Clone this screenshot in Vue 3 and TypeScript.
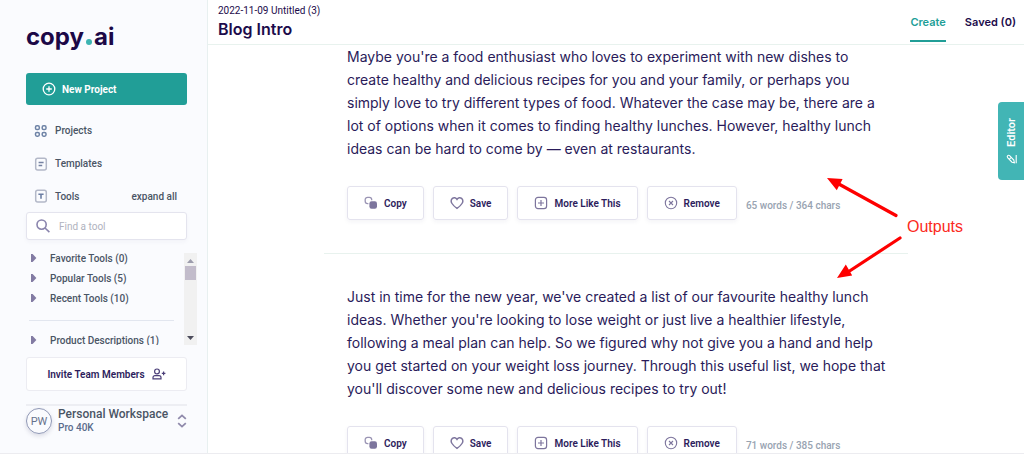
<script setup lang="ts">
import { ref } from 'vue'

interface Output {
  lines: string[]
  words: number
  chars: number
}

const query = ref('')

const groups: string[] = ['Favorite Tools (0)', 'Popular Tools (5)', 'Recent Tools (10)']

const outputs: Output[] = [
  {
    lines: [
      "Maybe you're a food enthusiast who loves to experiment with new dishes to",
      'create healthy and delicious recipes for you and your family, or perhaps you',
      'simply love to try different types of food. Whatever the case may be, there are a',
      'lot of options when it comes to finding healthy lunches. However, healthy lunch',
      'ideas can be hard to come by — even at restaurants.',
    ],
    words: 65,
    chars: 364,
  },
  {
    lines: [
      "Just in time for the new year, we've created a list of our favourite healthy lunch",
      "ideas. Whether you're looking to lose weight or just live a healthier lifestyle,",
      'following a meal plan can help. So we figured why not give you a hand and help',
      'you get started on your weight loss journey. Through this useful list, we hope that',
      "you'll discover some new and delicious recipes to try out!",
    ],
    words: 71,
    chars: 385,
  },
]
</script>

<template>
  <div class="app">
    <aside class="sidebar">
      <div class="logo">copy<span class="logo-dot"></span>ai</div>

      <button class="new-project" type="button">
        <svg width="14" height="14" viewBox="0 0 14 14" fill="none" stroke="currentColor" stroke-width="1.3">
          <circle cx="7" cy="7" r="5.8" />
          <path d="M7 4.2v5.6M4.2 7h5.6" />
        </svg>
        New Project
      </button>

      <nav class="nav">
        <a href="#projects">
          <svg width="14" height="14" viewBox="0 0 14 14" fill="none" stroke="#6e83a6" stroke-width="1.5">
            <rect x="1.5" y="1.8" width="3.8" height="3.8" rx="1.4" />
            <rect x="8.2" y="1.8" width="3.8" height="3.8" rx="1.4" />
            <rect x="1.5" y="8.4" width="3.8" height="3.8" rx="1.4" />
            <rect x="8.2" y="8.4" width="3.8" height="3.8" rx="1.4" />
          </svg>
          Projects
        </a>
        <a href="#templates">
          <svg width="14" height="14" viewBox="0 0 14 14" fill="none">
            <rect x="1.7" y="1.2" width="10.6" height="11.8" rx="2" stroke="#b3b8c8" stroke-width="1.5" />
            <path d="M4.6 5.4h5M4.6 8.6h3.6" stroke="#7682a2" stroke-width="1.5" />
          </svg>
          Templates
        </a>
        <div class="nav-row">
          <a href="#tools">
            <svg width="14" height="14" viewBox="0 0 14 14" fill="none">
              <rect x="1.7" y="1.2" width="10.6" height="11.8" rx="2" stroke="#b3b8c8" stroke-width="1.5" />
              <path d="M4.4 5.2h5.2M7 5v4.8" stroke="#6d7fa4" stroke-width="1.6" />
            </svg>
            Tools
          </a>
          <button class="expand" type="button">expand all</button>
        </div>
      </nav>

      <label class="search">
        <svg width="14" height="14" viewBox="0 0 14 14" fill="none" stroke="#8a84ad" stroke-width="1.6">
          <circle cx="5.6" cy="5.6" r="4.6" />
          <path d="M9 9l4.4 4.2" />
        </svg>
        <input v-model="query" type="text" placeholder="Find a tool" aria-label="Find a tool" />
      </label>

      <div class="tools">
        <div class="tool-list">
          <button v-for="group in groups" :key="group" class="group" type="button">
            <svg width="6" height="8" viewBox="0 0 6 8"><path d="M0 0h1.6L5.4 4 1.6 8H0z" fill="#827ba3" /></svg>
            {{ group }}
          </button>
          <hr />
          <button class="group" type="button">
            <svg width="6" height="8" viewBox="0 0 6 8"><path d="M0 0h1.6L5.4 4 1.6 8H0z" fill="#827ba3" /></svg>
            Product Descriptions (1)
          </button>
        </div>
        <div class="scrollbar" aria-hidden="true">
          <svg width="7" height="4" viewBox="0 0 7 4"><path d="M3.5 0L7 4H0z" fill="#9c9cac" /></svg>
          <div class="thumb"></div>
          <svg class="down" width="7" height="4" viewBox="0 0 7 4"><path d="M3.5 4L7 0H0z" fill="#4c4c5c" /></svg>
        </div>
      </div>

      <button class="invite" type="button">
        Invite Team Members
        <svg width="14" height="12" viewBox="0 0 14 12" fill="none" stroke="#4b3f78" stroke-width="1.2">
          <circle cx="5" cy="3.4" r="2.4" />
          <path d="M1 10.8V9.6c0-1.2.9-2 2-2h4c1.1 0 2 .8 2 2v1.2zM9.8 5.4h3.6M11.6 3.6v3.6" />
        </svg>
      </button>

      <button class="workspace" type="button">
        <span class="avatar">PW</span>
        <span class="who">
          <span class="name">Personal Workspace</span>
          <span class="plan">Pro 40K</span>
        </span>
        <svg width="10" height="14" viewBox="0 0 10 14" fill="none" stroke="#8f89ab" stroke-width="1.8">
          <path d="M1.2 4.8L5 1.4l3.8 3.4M1.2 9.2L5 12.6l3.8-3.4" />
        </svg>
      </button>
    </aside>

    <main class="main">
      <header class="header">
        <div class="titles">
          <div class="project">2022-11-09 Untitled (3)</div>
          <h1>Blog Intro</h1>
        </div>
        <nav class="tabs">
          <a class="active" href="#create">Create</a>
          <a href="#saved">Saved (0)</a>
        </nav>
      </header>

      <div class="outputs">
        <article v-for="output in outputs" :key="output.words" class="output">
          <p><span v-for="line in output.lines" :key="line">{{ line }} </span></p>
          <div class="actions">
            <button type="button">
              <svg width="14" height="14" viewBox="0 0 14 14" fill="none">
                <path d="M4.4 7.6H3.6C2.2 7.6 1.2 6.5 1.2 5.2V3.6c0-1.3 1-2.3 2.4-2.3h1.8c1.3 0 2.3 1 2.3 2.3v.6" stroke="#9a94b4" stroke-width="1.3" />
                <rect x="5.4" y="5.2" width="7.6" height="7.6" rx="2.2" fill="#7d759d" />
              </svg>
              Copy
            </button>
            <button type="button">
              <svg width="14" height="14" viewBox="0 0 14 14" fill="none" stroke="#7d759d" stroke-width="1.4">
                <path d="M7 3.3C6 1.5 3.8 1.2 2.4 2.4.9 3.7 1 5.9 2 7.5 3.1 9.3 5 11 7 12.4c2-1.4 3.9-3.1 5-4.9 1-1.6 1.1-3.8-.4-5.1C10.2 1.2 8 1.5 7 3.3z" />
              </svg>
              Save
            </button>
            <button type="button">
              <svg width="14" height="14" viewBox="0 0 14 14" fill="none" stroke="#7d759d" stroke-width="1.2">
                <rect x="1.4" y="1.4" width="11.2" height="11.2" rx="2.6" />
                <path d="M7 4v6M4 7h6" />
              </svg>
              More Like This
            </button>
            <button type="button">
              <svg width="14" height="14" viewBox="0 0 14 14" fill="none" stroke="#7d759d" stroke-width="1.1">
                <circle cx="7" cy="7" r="5.7" />
                <path d="M5 5l4 4M9 5l-4 4" />
              </svg>
              Remove
            </button>
            <span class="count">{{ output.words }} words / {{ output.chars }} chars</span>
          </div>
        </article>
      </div>

      <button class="editor" type="button">
        <svg width="11" height="11" viewBox="0 0 11 11" fill="none" stroke="currentColor" stroke-width="1.1">
          <path d="M10.2 2v8.2M8.4 9.8L7.8 7 3.6 2.6C2.2 1.6.6 3.200 1.600 4.600L6 9.200l2.400.6zM3.400 6.200l2-1.800" />
        </svg>
        <span>Editor</span>
      </button>

      <div class="note">
        <svg width="80" height="108" viewBox="0 0 80 108" fill="none">
          <path d="M69 38.5L10 6M73 61L18 97" stroke="#fe0000" stroke-width="3.2" stroke-linecap="round" />
          <path d="M0 1l15.6 1-5.8 11.2zM10 101l8.8-13.6 6.4 11z" fill="#fe0000" />
        </svg>
        <span>Outputs</span>
      </div>
    </main>
  </div>
</template>

<style>
body {
  margin: 0;
}
</style>

<style scoped>
* {
  box-sizing: border-box;
}

.app {
  display: flex;
  height: 100vh;
  overflow: hidden;
  border-bottom: 1px solid #ececf0;
  background: #fff;
  color: #1c0b4b;
  font-family: Roboto, "Liberation Sans", sans-serif;
  font-size: 10px;
}

button {
  display: flex;
  align-items: center;
  margin: 0;
  padding: 0;
  border: 0;
  background: none;
  color: inherit;
  font: inherit;
  cursor: pointer;
}

a {
  color: inherit;
  text-decoration: none;
}

svg {
  flex: none;
  display: block;
}

.sidebar {
  flex: none;
  display: flex;
  flex-direction: column;
  width: 208px;
  padding: 22px 20px 0 26px;
  border-right: 1px solid #e8f0f0;
  background: #fafbfe;
}

.logo {
  display: flex;
  align-items: baseline;
  height: 51px;
  color: #1c0847;
  font-family: Inter, "Liberation Sans", sans-serif;
  font-size: 24px;
  font-weight: 700;
  line-height: 29px;
}

.logo-dot {
  width: 6px;
  height: 6px;
  margin: 0 2px;
  border-radius: 50%;
  background: #3cb4b2;
}

.new-project {
  gap: 6px;
  height: 32px;
  padding: 0 16px;
  border-radius: 3px;
  background: #219e97;
  color: #fff;
  font-weight: 700;
}

.nav {
  display: flex;
  flex-direction: column;
  padding: 9px 10px 0 8px;
  color: #4a5565;
  font-weight: 500;
}

.nav a {
  display: flex;
  align-items: center;
  gap: 7px;
  height: 33px;
}

.nav-row {
  display: flex;
  justify-content: space-between;
  align-items: center;
  height: 32px;
}

.search {
  display: flex;
  align-items: center;
  gap: 9px;
  flex: none;
  height: 28px;
  padding: 0 9px;
  border: 1px solid #e4e4ee;
  border-radius: 3px;
  background: #fff;
  box-shadow: 0 2px 4px rgba(40, 40, 90, 0.04);
}

.search input {
  flex: 1;
  min-width: 0;
  padding: 0;
  border: 0;
  outline: 0;
  background: none;
  color: inherit;
  font: inherit;
}

.search input::placeholder {
  color: #b0b2be;
  opacity: 1;
}

.tools {
  flex: none;
  display: flex;
  height: 92px;
  margin: 13px -10px 0 0;
  overflow: hidden;
}

.tool-list {
  flex: 1;
  padding: 0 10px 0 3px;
  margin-top: -5px;
}

.group {
  gap: 13px;
  height: 20px;
  padding-left: 2px;
  color: #4a5565;
  font-weight: 500;
  white-space: nowrap;
}

hr {
  margin: 12px 0 9px;
  border: 0;
  border-top: 1px solid #e2e6ef;
}

.scrollbar {
  flex: none;
  display: flex;
  flex-direction: column;
  align-items: center;
  width: 13px;
  padding: 6px 0 5px;
  background: #f1f1f1;
}

.thumb {
  width: 11px;
  height: 14px;
  margin-top: 3px;
  background: #c2bccb;
}

.down {
  margin-top: auto;
}

.invite {
  flex: none;
  justify-content: center;
  gap: 7px;
  height: 34px;
  margin-top: 12px;
  border: 1px solid #ececf2;
  border-radius: 3px;
  background: #fff;
  color: #2d1d5c;
  font-weight: 600;
}

.workspace {
  flex: none;
  gap: 6px;
  height: 31px;
  margin-top: 13px;
  padding-top: 1px;
  border-top: 2px solid #edeef3;
  text-align: left;
}

.avatar {
  display: flex;
  align-items: center;
  justify-content: center;
  width: 26px;
  height: 26px;
  border: 1px solid #8f97b5;
  border-radius: 50%;
  color: #66728c;
  font-size: 11px;
  box-shadow: 0 2px 4px rgba(40, 40, 90, 0.15);
}

.who {
  flex: 1;
  color: #4a5565;
  font-weight: 500;
  white-space: nowrap;
}

.who span {
  display: block;
  line-height: 14px;
}

.who .name {
  font-size: 12px;
}

.who .plan {
  color: #5b6b8c;
}

.main {
  position: relative;
  flex: 1;
  min-width: 0;
  display: flex;
  flex-direction: column;
}

.header {
  flex: none;
  display: flex;
  justify-content: space-between;
  height: 45px;
  padding: 4px 8px 0 10px;
  border-bottom: 1px solid #e8f2ee;
}

.project {
  line-height: 14px;
}

h1 {
  margin: 0;
  font-family: Inter, "Liberation Sans", sans-serif;
  font-size: 16px;
  font-weight: 600;
  line-height: 22px;
}

.tabs {
  display: flex;
  gap: 19px;
  font-family: Inter, "Liberation Sans", sans-serif;
  font-size: 11px;
  font-weight: 600;
}

.tabs a {
  height: 38px;
  line-height: 37px;
}

.tabs .active {
  border-bottom: 2px solid #219e97;
  color: #219e97;
}

.outputs {
  flex: 1;
  min-height: 0;
  padding: 0 116px;
  overflow: hidden;
}

.output {
  padding: 0 0 33px 23px;
}

.output + .output {
  padding-top: 31px;
  border-top: 1px solid #e8f2ee;
}

.output p {
  margin: 0 0 26px;
  color: #2a1b5a;
  font-family: Inter, "Liberation Sans", sans-serif;
  font-size: 14px;
  line-height: 23px;
}

.output p span {
  display: block;
  white-space: nowrap;
}

.actions {
  display: flex;
  gap: 9px;
}

.actions button {
  gap: 6px;
  height: 34px;
  padding: 0 16px;
  border: 1px solid #e4e3ee;
  border-radius: 3px;
  box-shadow: 0 2px 4px rgba(40, 40, 90, 0.05);
  color: #2d1d5c;
  font-weight: 600;
}

.count {
  align-self: flex-end;
  color: #98a3b1;
  font-weight: 500;
  line-height: 28px;
}

.editor {
  position: absolute;
  top: 102px;
  right: 0;
  flex-direction: column-reverse;
  justify-content: center;
  gap: 6px;
  width: 26px;
  height: 78px;
  border-radius: 4px 0 0 4px;
  background: #42b5b5;
  color: #fff;
  font-size: 11px;
  font-weight: 600;
}

.editor span {
  writing-mode: vertical-rl;
  transform: rotate(180deg);
}

.note {
  position: absolute;
  top: 177px;
  right: 61px;
  display: flex;
  align-items: center;
  color: #fb2a22;
  font-family: "Liberation Sans", Arial, sans-serif;
  font-size: 16px;
}

.note span {
  padding-bottom: 8px;
}
</style>
